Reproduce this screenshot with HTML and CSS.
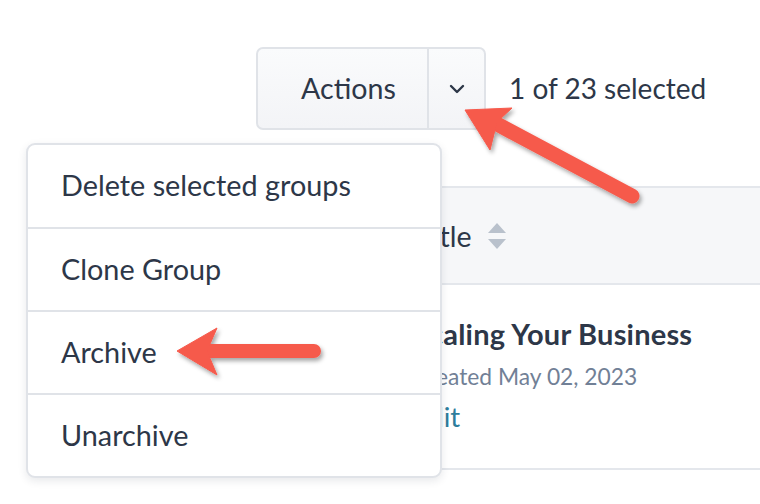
FILE: index.html
```html
<!DOCTYPE html>
<html>
<head>
<meta charset="utf-8">
<link rel="stylesheet" href="styles.css">
</head>
<body>
<div class="page">
  <div class="toolbar">
    <div class="btn-group">
      <button class="btn-main">Actions</button>
      <button class="btn-caret">
        <svg width="16" height="10" viewBox="0 0 16 10"><path d="M2 2 L8 8 L14 2" fill="none" stroke="#2d3748" stroke-width="2.4" stroke-linecap="round" stroke-linejoin="round"/></svg>
      </button>
    </div>
    <span class="count">1 of 23 selected</span>
  </div>

  <div class="table">
    <div class="thead">
      <div class="cell-check"></div>
      <div class="th-title">Title
        <svg class="sort" width="20" height="28" viewBox="0 0 20 28"><path d="M10 1 L19 11 L1 11 Z" fill="#b9c1cc"/><path d="M10 27 L19 17 L1 17 Z" fill="#b9c1cc"/></svg>
      </div>
    </div>
    <div class="row">
      <div class="cell-check wide"></div>
      <div class="cell-main">
        <div class="name">Scaling Your Business</div>
        <div class="meta">Created May 02, 2023</div>
        <a class="edit">Edit</a>
      </div>
    </div>
  </div>

  <ul class="menu">
    <li>Delete selected groups</li>
    <li>Clone Group</li>
    <li>Archive</li>
    <li>Unarchive</li>
  </ul>

  <svg class="arrows" width="760" height="504" viewBox="0 0 760 504">
    <defs>
      <filter id="sh" x="-20%" y="-20%" width="140%" height="140%">
        <feDropShadow dx="2" dy="3" stdDeviation="2.2" flood-color="#000" flood-opacity="0.35"/>
      </filter>
    </defs>
    <g filter="url(#sh)" fill="#f65a4c" stroke="#f65a4c">
      <line x1="632" y1="196" x2="497" y2="124" stroke-width="15" stroke-linecap="round"/>
      <path d="M465 110 L512 108 L497 122 L490 150 Z" stroke-width="1" stroke-linejoin="round"/>
    </g>
    <g filter="url(#sh)" fill="#f65a4c" stroke="#f65a4c">
      <line x1="314" y1="351" x2="205" y2="351" stroke-width="14" stroke-linecap="round"/>
      <path d="M177 351 L217 328 L207 351 L217 375 Z" stroke-width="1" stroke-linejoin="round"/>
    </g>
  </svg>
</div>
</body>
</html>
```

FILE: styles.css
```css
* { box-sizing: border-box; }
html, body { margin: 0; padding: 0; background: #fff; }
body {
  font-family: "Lato", "Liberation Sans", sans-serif;
  color: #2d3748;
  width: 760px;
  height: 504px;
  overflow: hidden;
}
.page { position: relative; width: 760px; height: 504px; overflow: hidden; }

.toolbar {
  display: flex;
  align-items: center;
  padding: 47px 0 0 256px;
}
.btn-group {
  display: flex;
  height: 83px;
  border: 2px solid #e0e3e8;
  border-radius: 7px;
  background: linear-gradient(#fafbfc, #f3f4f7);
}
.btn-main, .btn-caret {
  border: 0;
  background: transparent;
  font-family: inherit;
  color: #2d3748;
  font-size: 28.6px;
  padding: 0;
  display: flex;
  align-items: center;
  justify-content: center;
}
.btn-main { width: 171px; border-right: 2px solid #e0e3e8; padding: 0 0 2px 12px; }
.btn-caret { width: 55px; }
.count { margin-left: 23px; font-size: 28px; padding-bottom: 2px; }

.table {
  margin: 56px 0 0 256px;
  border-left: 2px solid #e4e7ec;
  border-top: 2px solid #e4e7ec;
}
.thead {
  display: flex;
  align-items: center;
  height: 97px;
  background: #f6f7f9;
  border-bottom: 2px solid #e4e7ec;
}
.cell-check { width: 158px; flex: none; }
.cell-check.wide { width: 155px; }
.th-title {
  display: flex;
  align-items: center;
  gap: 15px;
  font-size: 28.5px;
}
.sort { display: block; }
.row {
  display: flex;
  height: 185px;
  border-bottom: 2px solid #e4e7ec;
}
.cell-main { padding: 29px 0 0 0; }
.name { font-size: 29px; font-weight: 700; line-height: 40px; letter-spacing: 0.2px; }
.meta { font-size: 22.8px; color: #718096; line-height: 40px; margin-top: 2px; }
.edit { display: block; font-size: 27.5px; color: #2e7d9c; line-height: 40px; margin-top: 1px; }

.menu {
  position: absolute;
  left: 26px;
  top: 143px;
  width: 416px;
  margin: 0;
  padding: 0;
  list-style: none;
  background: #fff;
  border: 2px solid #e0e3e8;
  border-radius: 9px;
  box-shadow: 0 3px 8px rgba(30, 40, 60, 0.10);
}
.menu li {
  height: 83px;
  display: flex;
  align-items: center;
  padding: 0 0 2px 33px;
  font-size: 28.8px;
  border-top: 2px solid #e0e3e8;
}
.menu li:first-child { border-top: 0; height: 82px; }

.arrows { position: absolute; left: 0; top: 0; pointer-events: none; }
```
